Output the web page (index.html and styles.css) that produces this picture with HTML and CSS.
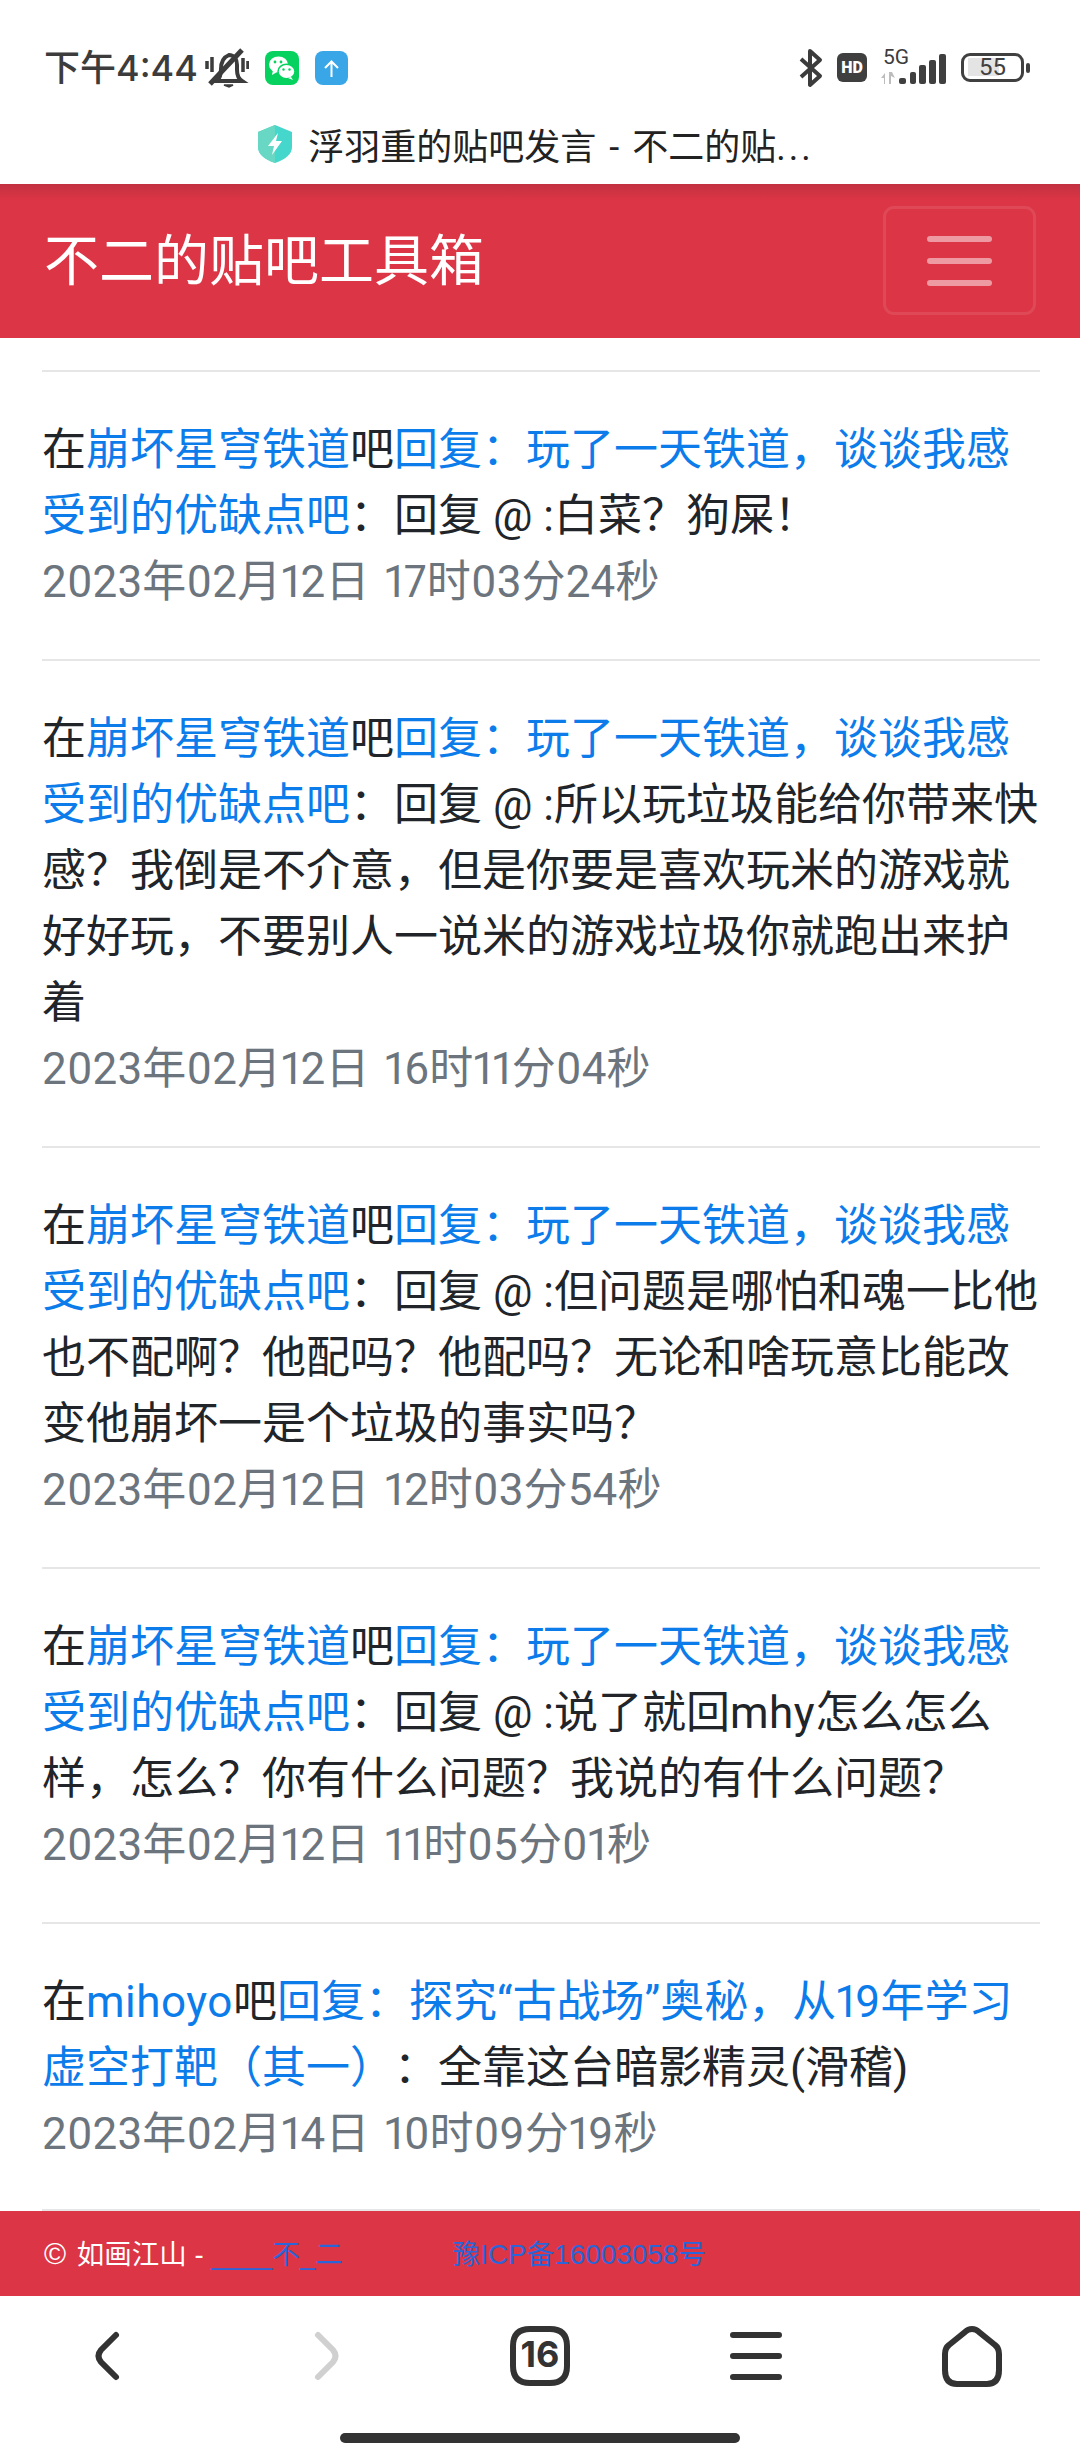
FILE: index.html
```html
<!DOCTYPE html>
<html lang="zh-CN">
<head>
    <meta charset="UTF-8">
    <title>浮羽重的贴吧发言 - 不二的贴吧工具箱</title>
    <link rel="stylesheet" href="styles.css">
</head>
<body>
    <div class="status">
        <div class="status-left">
            <span class="time">下午4:44</span>
            <svg class="bell" width="44" height="40" viewBox="0 0 44 40" fill="none" stroke="#3c3c3c">
                <path d="M2 13v8M7 9v15M38 10v14M43 13v8" stroke-width="3.5"/>
                <path d="M12 33c3-3 4-6 4-12 0-7 3-12 8-14 5 0 8 4 8 10v5c0 5 2 9 5 11z" stroke-width="4"/>
                <path d="M5 36L37 2" stroke-width="5"/>
                <path d="M19 37h9l-4 2z" fill="#3c3c3c" stroke-width="1.5"/>
            </svg>
            <svg class="wechat" width="34" height="34" viewBox="0 0 34 34">
                <rect width="34" height="34" rx="8" fill="#07d25f"/>
                <ellipse cx="13.5" cy="13.5" rx="9.5" ry="8" fill="#fff"/>
                <path d="M8 19l-1 5 5-3z" fill="#fff"/>
                <ellipse cx="21.5" cy="20.5" rx="8.5" ry="7.2" fill="#fff" stroke="#07d25f" stroke-width="1.5"/>
                <path d="M26 26l2 3-5-2z" fill="#fff"/>
                <circle cx="10" cy="11" r="1.4" fill="#07d25f"/>
                <circle cx="16" cy="11" r="1.4" fill="#07d25f"/>
                <circle cx="18.5" cy="18.5" r="1.2" fill="#07d25f"/>
                <circle cx="24.5" cy="18.5" r="1.2" fill="#07d25f"/>
            </svg>
            <svg class="upload" width="33" height="34" viewBox="0 0 33 34" fill="none">
                <rect width="33" height="34" rx="8" fill="#39a6e8"/>
                <path d="M16.5 26V11M10 17l6.500-6.500L23 17" stroke="#fff" stroke-width="2"/>
            </svg>
        </div>
        <div class="status-right">
            <svg width="24" height="40" viewBox="0 0 24 40" fill="none">
                <path d="M2 11l19 17-10 9V3l10 9L2 29" stroke="#3c3c3c" stroke-width="4" stroke-linejoin="round"/>
            </svg>
            <span class="hd">HD</span>
            <svg class="signal" width="67" height="40" viewBox="0 0 67 40">
                <text class="net" x="4" y="16">5G</text>
                <path d="M2 30l4-5v11h-1v-6zM13 24h-3v12h2v-8l4 2z" fill="#bdbdbd"/>
                <rect x="20" y="30" width="7" height="6" rx="2" fill="#3f3f3f"/>
                <rect x="31" y="24" width="6" height="12" rx="2" fill="#3f3f3f"/>
                <rect x="40" y="17" width="7" height="19" rx="2" fill="#3f3f3f"/>
                <rect x="50" y="12" width="7" height="24" rx="2" fill="#3f3f3f"/>
                <rect x="60" y="6" width="7" height="30" rx="2" fill="#3f3f3f"/>
            </svg>
            <div class="battery-wrap">
                <div class="battery">55</div>
                <span class="battery-nub"></span>
            </div>
        </div>
    </div>

    <div class="address">
        <svg width="34" height="38" viewBox="0 0 34 38">
            <path d="M17 0L34 7v15q0 10-17 16Q0 32 0 22V7z" fill="#45d6cc"/>
            <path d="M17 0L0 7v15q0 10 17 16z" fill="#68d8c4"/>
            <path d="M20 8l-10 13h6l-2 9 10-14h-6z" fill="#fff"/>
        </svg>
        <span>浮羽重的贴吧发言 - 不二的贴<span class="dots">...</span></span>
    </div>

    <nav class="navbar">
        <a class="brand">不二的贴吧工具箱</a>
        <button class="toggler"><i></i><i></i><i></i></button>
    </nav>

    <main class="list">
        <ul>
            <li>
                <p>在<a>崩坏星穹铁道</a>吧<a>回复：玩了一天铁道，谈谈我感受到的优缺点吧</a>：回复 @ :白菜？狗屎！</p>
                <small>2023年02月12日 17时03分24秒</small>
            </li>
            <li>
                <p>在<a>崩坏星穹铁道</a>吧<a>回复：玩了一天铁道，谈谈我感受到的优缺点吧</a>：回复 @ :所以玩垃圾能给你带来快感？我倒是不介意，但是你要是喜欢玩米的游戏就好好玩，不要别人一说米的游戏垃圾你就跑出来护着</p>
                <small>2023年02月12日 16时11分04秒</small>
            </li>
            <li>
                <p>在<a>崩坏星穹铁道</a>吧<a>回复：玩了一天铁道，谈谈我感受到的优缺点吧</a>：回复 @ :但问题是哪怕和魂一比他也不配啊？他配吗？他配吗？无论和啥玩意比能改变他崩坏一是个垃圾的事实吗？</p>
                <small>2023年02月12日 12时03分54秒</small>
            </li>
            <li>
                <p>在<a>崩坏星穹铁道</a>吧<a>回复：玩了一天铁道，谈谈我感受到的优缺点吧</a>：回复 @ :说了就回<span class="latin">mhy</span>怎么怎么样，怎么？你有什么问题？我说的有什么问题？</p>
                <small>2023年02月12日 11时05分01秒</small>
            </li>
            <li>
                <p>在<a class="latin">mihoyo</a>吧<a>回复：探究“古战场”奥秘，从19年学习虚空打靶（其一）</a>：全靠这台暗影精灵(滑稽)</p>
                <small>2023年02月14日 10时09分19秒</small>
            </li>
        </ul>
    </main>

    <footer class="footer">
        <span><span class="copy">©</span> 如画江山 - <a>____不_二</a><a class="icp">豫ICP备16003058号</a></span>
    </footer>

    <div class="toolbar">
        <div class="tools">
            <svg width="64" height="64" viewBox="0 0 64 64" fill="none" stroke="#333" stroke-width="6" stroke-linecap="round">
                <path d="M40 11L25 26q-5 6 0 12l15 15"/>
            </svg>
            <svg width="64" height="64" viewBox="0 0 64 64" fill="none" stroke="#d0d0d0" stroke-width="6" stroke-linecap="round">
                <path d="M26 11l15 15q5 6 0 12L26 53"/>
            </svg>
            <svg width="64" height="64" viewBox="0 0 64 64" fill="none" stroke="#333" stroke-width="6">
                <path d="M5 22Q5 5 22 5h20q17 0 17 17v20q0 17-17 17H22Q5 59 5 42z"/>
                <text class="tab-count" x="32" y="43">16</text>
            </svg>
            <svg width="64" height="64" viewBox="0 0 64 64" fill="none" stroke="#333" stroke-width="6" stroke-linecap="round">
                <path d="M9 11h46M9 32h46M9 53h46"/>
            </svg>
            <svg width="64" height="64" viewBox="0 0 64 64" fill="none" stroke="#333" stroke-width="6">
                <path d="M32 5q-4 0-7 3L9 21q-4 3-4 9v16q0 14 12 14h30q12 0 12-14V30q0-6-4-9L39 8q-3-3-7-3z"/>
            </svg>
        </div>
        <div class="home-bar"></div>
    </div>
</body>
</html>
```

FILE: styles.css
```css
*{
    margin: 0;
    padding: 0;
    box-sizing: border-box;
}
body{
    width: 1080px;
    height: 2460px;
    overflow: hidden;
    display: flex;
    flex-direction: column;
    background: #fff;
    color: #212529;
    font-family: Roboto, "Noto Sans CJK SC", sans-serif;
}

/* phone status bar */
.status{
    height: 110px;
    padding: 48px 50px 0 44px;
    display: flex;
    justify-content: space-between;
    align-items: flex-start;
}
.status-left,
.status-right{
    display: flex;
    align-items: flex-start;
}
.time{
    width: 161px;
    font-family: Inter, "Noto Sans CJK SC", sans-serif;
    font-size: 36px;
    line-height: 40px;
    font-weight: 500;
    color: #3c3c3c;
}
.wechat{
    margin: 3px 0 0 16px;
}
.upload{
    margin: 3px 0 0 16px;
}
.hd{
    width: 30px;
    height: 29px;
    margin: 5px 0 0 14px;
    border-radius: 6px;
    background: #3f3f3f;
    color: #fff;
    font-size: 16px;
    font-weight: 900;
    line-height: 29px;
    text-align: center;
}
.signal{
    margin-left: 12px;
}
.net{
    font-size: 21px;
    fill: #3c3c3c;
}
.battery-wrap{
    display: flex;
    align-items: center;
    height: 29px;
    margin: 5px 0 0 15px;
}
.battery{
    width: 63px;
    height: 29px;
    border: 3.5px solid #404040;
    border-radius: 9px;
    background: linear-gradient(#e4e4e4, #e4e4e4) 4px 2px / 31px 18px no-repeat;
    color: #404040;
    font-size: 24px;
    line-height: 22px;
    text-align: center;
}
.battery-nub{
    width: 4px;
    height: 10px;
    margin-left: 2px;
    border-radius: 2px;
    background: #404040;
}

/* browser title */
.address{
    height: 74px;
    padding: 0 8px 6px 0;
    display: flex;
    justify-content: center;
    align-items: center;
    gap: 16px;
    font-size: 36px;
    word-spacing: 4px;
    color: #222;
}
.dots{
    letter-spacing: 3px;
}

.navbar{
    height: 154px;
    padding: 22px 44px 0;
    display: flex;
    justify-content: space-between;
    align-items: flex-start;
    background: linear-gradient(#c23141, #dc3545 16px);
}
.brand{
    font-size: 55px;
    line-height: 110px;
    color: #fff;
}
.toggler{
    width: 153px;
    height: 109px;
    display: flex;
    flex-direction: column;
    justify-content: center;
    align-items: center;
    gap: 16px;
    border: 3px solid rgba(255,255,255,.1);
    border-radius: 11px;
    background: transparent;
}
.toggler i{
    width: 65px;
    height: 6px;
    border-radius: 3px;
    background: rgba(255,255,255,.5);
}

.list{
    flex: 1;
    min-height: 0;
    overflow: hidden;
    padding: 32px 40px 0 42px;
}
.list ul{
    list-style: none;
}
.list li{
    padding: 45px 0 44px;
    border-top: 2px solid #e6e6e6;
    font-size: 44px;
    line-height: 66px;
    text-spacing-trim: space-all;
    font-variant-numeric: proportional-nums;
}
.list li:last-child{
    padding-bottom: 42px;
    border-bottom: 2px solid #e6e6e6;
}
.list a{
    color: #0c7ceb;
}
.list .latin{
    letter-spacing: .5px;
}
.list small{
    display: block;
    font-size: 44px;
    letter-spacing: .15px;
    word-spacing: 4px;
    color: #6c757d;
}

.footer{
    height: 85px;
    padding: 0 0 3px 44px;
    display: flex;
    align-items: center;
    background: #dc3545;
    color: #fff;
    font-family: "Liberation Sans", "Noto Sans CJK SC", sans-serif;
    font-size: 27.500px;
}
.footer a{
    color: #2a66d9;
}
.footer .copy{
    margin-right: 3px;
    font-size: 30px;
}
.footer .icp{
    margin-left: 110px;
    letter-spacing: .2px;
}

/* browser toolbar */
.toolbar{
    height: 164px;
    padding-top: 28px;
}
.tools{
    display: grid;
    grid-template-columns: repeat(5, 1fr);
    justify-items: center;
}
.tab-count{
    font-family: Inter, sans-serif;
    font-size: 36px;
    font-weight: 700;
    fill: #333;
    stroke: none;
    text-anchor: middle;
}
.home-bar{
    width: 400px;
    height: 10px;
    margin: 45px auto 0;
    border-radius: 5px;
    background: #333;
}
```
